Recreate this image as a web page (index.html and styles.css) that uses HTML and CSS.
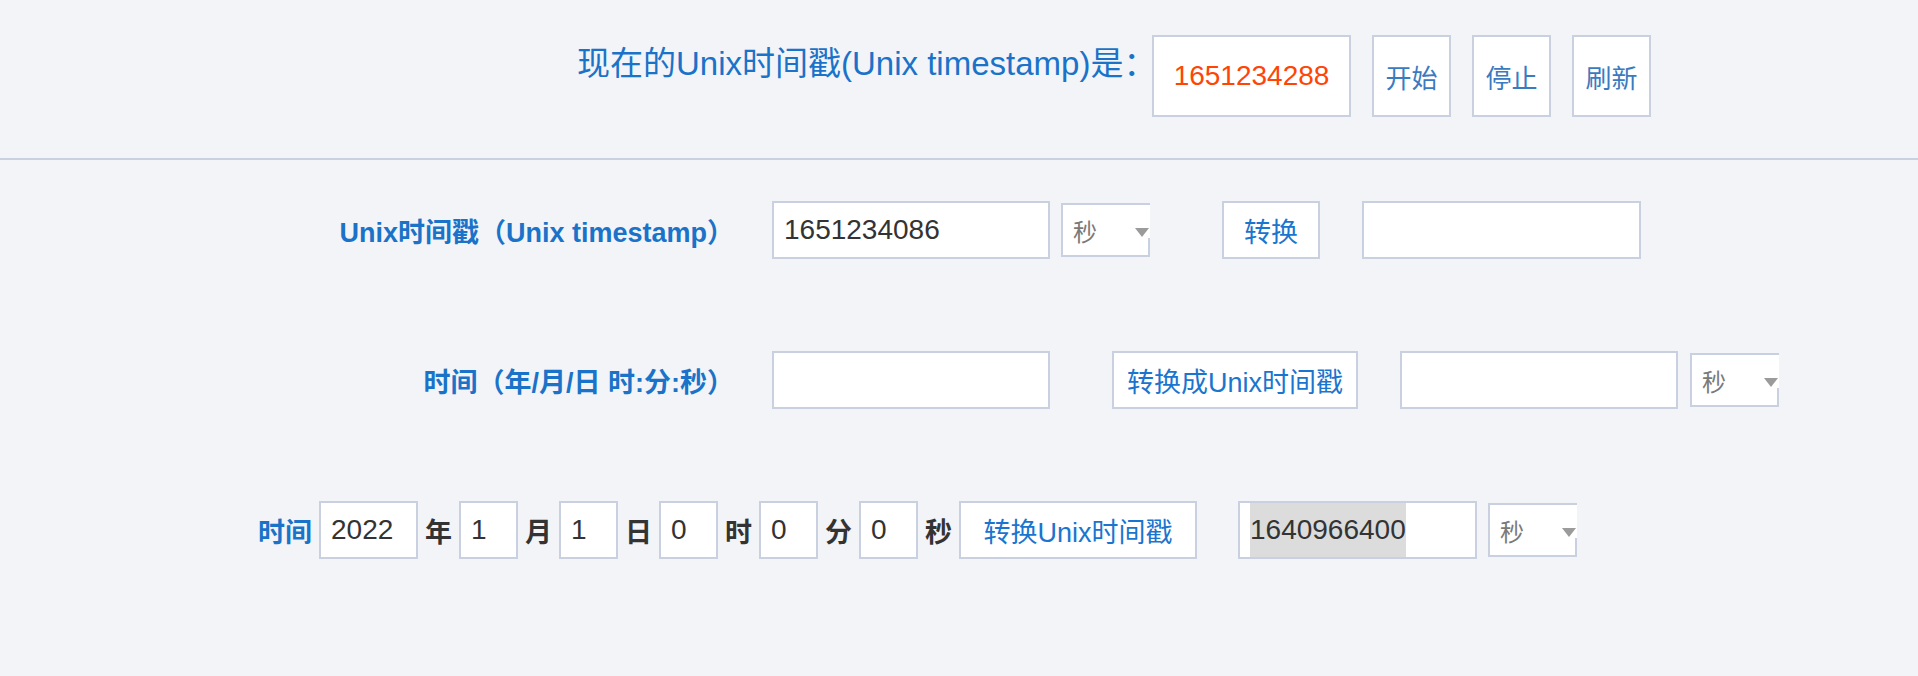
FILE: index.html
```html
<!DOCTYPE html>
<html lang="zh-CN">
<head>
    <meta charset="UTF-8">
    <meta name="viewport" content="width=device-width, initial-scale=1.0">
    <title>Unix时间戳转换</title>
    <link rel="stylesheet" href="styles.css">
</head>
<body>
    <header class="now-bar">
        <div class="now-row">
            <span class="now-label">现在的Unix时间戳(Unix timestamp)是：</span>
            <div class="now-value">1651234288</div>
            <button class="btn btn-top">开始</button>
            <button class="btn btn-top">停止</button>
            <button class="btn btn-top">刷新</button>
        </div>
    </header>

    <main class="tools">
        <div class="row row-first">
            <label class="row-label">Unix时间戳（Unix timestamp）</label>
            <input class="field field-wide" type="text" value="1651234086">
            <div class="unit-select sel-after-input">秒<svg class="arrow" width="16" height="33" viewBox="0 0 16 33"><rect width="16" height="33" fill="#fff"/><path d="M1 23 L15 23 L8 32 Z" fill="#9b9b9b"/></svg></div>
            <button class="btn btn-convert">转换</button>
            <input class="field field-out" type="text">
        </div>

        <div class="row">
            <label class="row-label">时间（年/月/日 时:分:秒）</label>
            <input class="field field-wide" type="text">
            <button class="btn btn-to-unix">转换成Unix时间戳</button>
            <input class="field field-wide out-gap" type="text">
            <div class="unit-select sel-after-out">秒<svg class="arrow" width="16" height="33" viewBox="0 0 16 33"><rect width="16" height="33" fill="#fff"/><path d="M1 23 L15 23 L8 32 Z" fill="#9b9b9b"/></svg></div>
        </div>

        <div class="row row-parts">
            <label class="parts-label">时间</label>
            <input class="field field-year" type="text" value="2022">
            <span class="unit">年</span>
            <input class="field field-small" type="text" value="1">
            <span class="unit">月</span>
            <input class="field field-small" type="text" value="1">
            <span class="unit">日</span>
            <input class="field field-small" type="text" value="0">
            <span class="unit">时</span>
            <input class="field field-small" type="text" value="0">
            <span class="unit">分</span>
            <input class="field field-small" type="text" value="0">
            <span class="unit">秒</span>
            <button class="btn btn-parts">转换Unix时间戳</button>
            <div class="field field-result"><span class="picked">1640966400</span></div>
            <div class="unit-select sel-after-result">秒<svg class="arrow" width="16" height="33" viewBox="0 0 16 33"><rect width="16" height="33" fill="#fff"/><path d="M1 23 L15 23 L8 32 Z" fill="#9b9b9b"/></svg></div>
        </div>
    </main>
</body>
</html>
```

FILE: styles.css
```css
body {
    margin: 0;
    background-color: #f3f4f8;
    font-family: "Liberation Sans", "Noto Sans CJK SC", sans-serif;
    color: #333;
}

.now-bar {
    height: 158px;
    border-bottom: 2px solid #c9d0e0;
}
.now-row {
    display: flex;
    align-items: flex-start;
    padding: 35px 0 0 577px;
}
.now-label {
    width: 575px;
    margin-top: 8px;
    line-height: 42px;
    font-size: 33px;
    color: #1a73c8;
    white-space: nowrap;
}
.now-value {
    box-sizing: border-box;
    width: 199px;
    height: 82px;
    margin-right: 21px;
    border: 2px solid #c9d0e0;
    background: #fff;
    color: #fe4504;
    font-size: 28px;
    display: flex;
    align-items: center;
    justify-content: center;
}

.btn {
    box-sizing: border-box;
    padding: 0;
    border: 2px solid #c9d0e0;
    background: #fff;
    color: #1a75cf;
    font-family: inherit;
    font-size: 27px;
    cursor: pointer;
}
.btn-top {
    width: 79px;
    height: 82px;
    margin-right: 21px;
    font-size: 26px;
    color: #3a7bbf;
}

.tools {
    padding-top: 41px;
}
.row {
    display: flex;
    align-items: center;
    height: 58px;
    margin-top: 92px;
}
.row-first {
    margin-top: 0;
}
.row-label {
    box-sizing: border-box;
    width: 772px;
    padding-right: 38px;
    text-align: right;
    font-size: 27px;
    font-weight: bold;
    color: #1a73c8;
    white-space: nowrap;
}

.field {
    box-sizing: border-box;
    height: 58px;
    padding: 0 10px;
    border: 2px solid #c9d0e0;
    background: #fff;
    color: #333;
    font-family: inherit;
    font-size: 28px;
    outline: none;
}
.field-wide {
    width: 278px;
}
.field-out {
    width: 279px;
    margin-left: 42px;
}
.out-gap {
    margin-left: 42px;
}

.unit-select {
    position: relative;
    box-sizing: border-box;
    width: 89px;
    height: 54px;
    padding-left: 10px;
    border: 2px solid #c9d0e0;
    background: #fff;
    color: #7a7a7a;
    font-size: 24px;
    display: flex;
    align-items: center;
}
.unit-select .arrow {
    position: absolute;
    top: 0;
    right: -2px;
}
.sel-after-input {
    margin-left: 11px;
}
.sel-after-out {
    margin-left: 12px;
}
.sel-after-result {
    margin-left: 11px;
}

.btn-convert {
    width: 98px;
    height: 58px;
    margin-left: 72px;
}
.btn-to-unix {
    width: 246px;
    height: 58px;
    margin-left: 62px;
}

.row-parts {
    padding-left: 258px;
}
.parts-label {
    margin-right: 7px;
    font-size: 27px;
    font-weight: bold;
    color: #1a73c8;
}
.unit {
    width: 27px;
    margin: 0 7px;
    font-size: 27px;
    font-weight: bold;
    color: #333;
}
.field-year {
    width: 99px;
}
.field-small {
    width: 59px;
}
.btn-parts {
    width: 238px;
    height: 58px;
}
.field-result {
    width: 239px;
    margin-left: 41px;
    display: flex;
    align-items: stretch;
}
.picked {
    display: flex;
    align-items: center;
    background: #dcdcdc;
}
```
